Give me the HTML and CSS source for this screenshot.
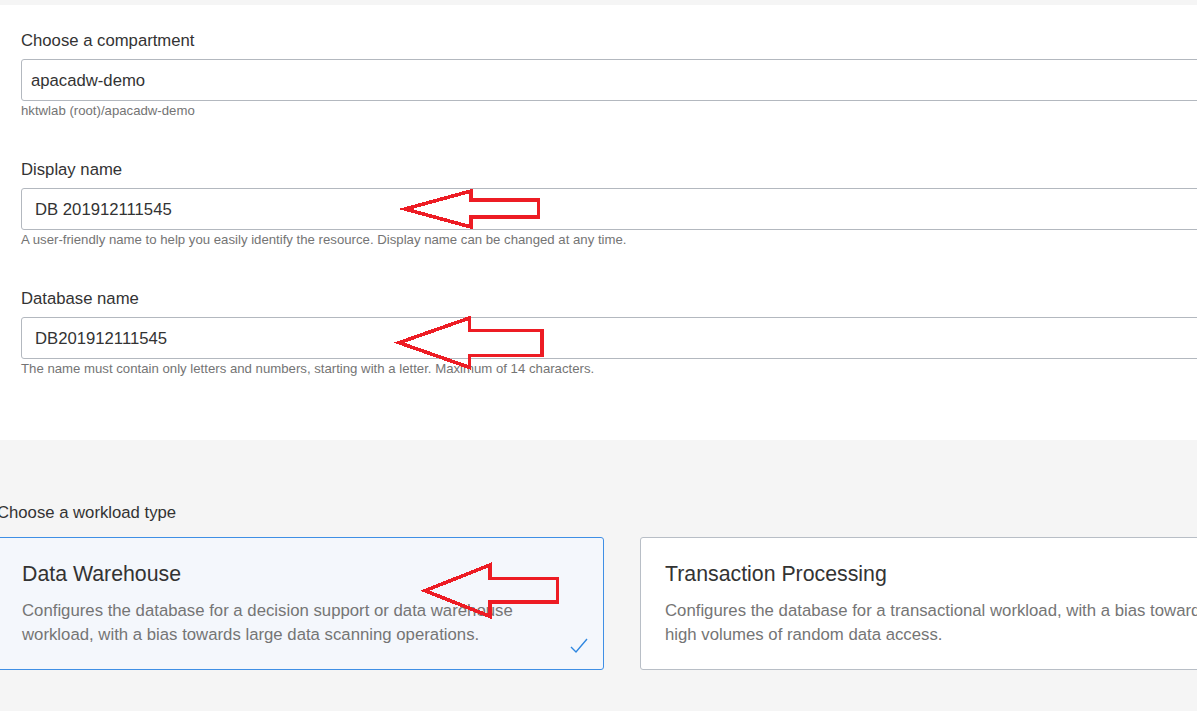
FILE: index.html
```html
<!DOCTYPE html>
<html lang="en">
<head>
<meta charset="utf-8">
<title>Create Autonomous Database</title>
<link rel="stylesheet" href="styles.css">
</head>
<body>
<div class="page">
  <section class="panel">
    <div class="field">
      <div class="field-label">Choose a compartment</div>
      <div class="field-input select">apacadw-demo</div>
      <div class="field-help">hktwlab (root)/apacadw-demo</div>
    </div>
    <div class="field">
      <div class="field-label">Display name</div>
      <div class="field-input text">DB 201912111545</div>
      <div class="field-help">A user-friendly name to help you easily identify the resource. Display name can be changed at any time.</div>
    </div>
    <div class="field">
      <div class="field-label">Database name</div>
      <div class="field-input text">DB201912111545</div>
      <div class="field-help">The name must contain only letters and numbers, starting with a letter. Maximum of 14 characters.</div>
    </div>
  </section>

  <section class="workload">
    <div class="workload-label">Choose a workload type</div>
    <div class="cards">
      <div class="card selected">
        <div class="card-title">Data Warehouse</div>
        <div class="card-desc">Configures the database for a decision support or data warehouse workload, with a bias towards large data scanning operations.</div>
        <svg class="check" width="18" height="16" viewBox="0 0 18 16"><polyline points="1,9 6,14 17,1" fill="none" stroke="#2f87e0" stroke-width="1.4"/></svg>
      </div>
      <div class="card">
        <div class="card-title">Transaction Processing</div>
        <div class="card-desc">Configures the database for a transactional workload, with a bias towards high volumes of random data access.</div>
      </div>
    </div>
  </section>

  <svg class="annotations" width="1197" height="711" viewBox="0 0 1197 711">
    <polygon points="405,204 471,186 471,195 538.5,195 538.5,212 471,212 471,222" />
    <polygon points="399,337.7 469.5,313 469.5,325.5 542,325.5 542,350.5 469.5,350.5 469.5,362.4" />
    <polygon points="425,585.7 490,560 490,573.5 557.5,573.5 557.5,597 490,597 490,611.4" />
  </svg>
</div>
</body>
</html>
```

FILE: styles.css
```css
html, body {
  margin: 0;
  padding: 0;
}

body {
  width: 1197px;
  height: 711px;
  overflow: hidden;
  background: #f5f5f5;
  font-family: "Liberation Sans", Arial, sans-serif;
  color: #333333;
}

.page {
  position: relative;
  width: 1197px;
  height: 711px;
}

.panel {
  margin-top: 5px;
  height: 435px;
  box-sizing: border-box;
  background: #ffffff;
  padding: 26px 0 0 21px;
  display: flex;
  flex-direction: column;
  gap: 41px;
}

.field {
  display: flex;
  flex-direction: column;
}

.field-label {
  font-size: 16.7px;
  line-height: 20px;
  color: #333333;
}

.field-input {
  margin-top: 8px;
  width: 1200px;
  height: 42px;
  box-sizing: border-box;
  border: 1px solid #b3b8bf;
  border-radius: 3px;
  background: #ffffff;
  display: flex;
  align-items: center;
  padding-top: 1px;
  font-size: 16.7px;
  color: #333333;
}

.field-input.select {
  padding-left: 9px;
}

.field-input.text {
  padding-left: 13px;
}

.field-help {
  margin-top: 2px;
  font-size: 13.2px;
  line-height: 16px;
  color: #747474;
  white-space: nowrap;
}

.workload {
  margin-left: -3px;
  padding-top: 63px;
}

.workload-label {
  font-size: 16.7px;
  line-height: 20px;
  color: #333333;
  white-space: nowrap;
}

.cards {
  margin-top: 14px;
  display: flex;
  gap: 36px;
}

.card {
  position: relative;
  flex: 0 0 auto;
  width: 607px;
  box-sizing: border-box;
  padding: 23px 24px 22px 24px;
  border: 1px solid #b8bec6;
  border-radius: 3px;
  background: #ffffff;
}

.card.selected {
  border-color: #3f8fe5;
  background: #f4f7fc;
}

.card-title {
  font-size: 21.3px;
  line-height: 26px;
  color: #333333;
}

.card-desc {
  margin-top: 12px;
  font-size: 16.75px;
  line-height: 24px;
  color: #757575;
}

.check {
  position: absolute;
  right: 15px;
  bottom: 15px;
}

.annotations {
  position: absolute;
  left: 0;
  top: 0;
  pointer-events: none;
}

.annotations polygon {
  fill: none;
  stroke: #ed1c24;
  stroke-width: 3.6;
  stroke-linejoin: miter;
  shape-rendering: crispEdges;
}
```
